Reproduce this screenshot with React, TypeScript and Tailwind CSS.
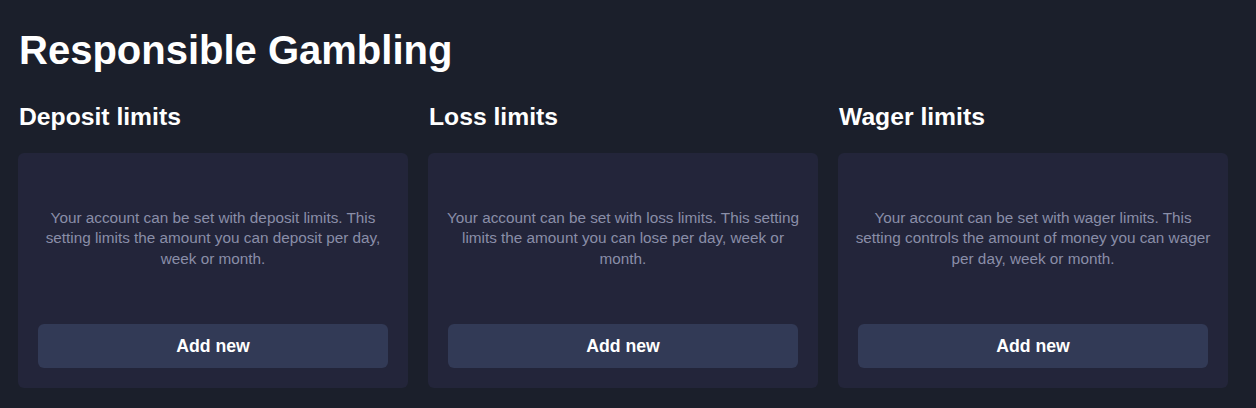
const sections = [
  {
    title: 'Deposit limits',
    text: 'Your account can be set with deposit limits. This setting limits the amount you can deposit per day, week or month.',
  },
  {
    title: 'Loss limits',
    text: 'Your account can be set with loss limits. This setting limits the amount you can lose per day, week or month.',
  },
  {
    title: 'Wager limits',
    text: 'Your account can be set with wager limits. This setting controls the amount of money you can wager per day, week or month.',
  },
]

export default function App() {
  return (
    <div
      className="min-h-[408px] bg-[#1b1f2b] px-[18px] pt-[24px] text-white"
      style={{ fontFamily: '"Liberation Sans", Arial, sans-serif' }}
    >
      <h1 className="pl-px text-[40px] font-bold leading-[52px]">Responsible Gambling</h1>
      <div className="mt-[26px] grid w-[1210px] grid-cols-3 gap-5">
        {sections.map((s) => (
          <div key={s.title} className="flex flex-col">
            <h2 className="pl-px text-[24.7px] font-bold leading-[30px]">{s.title}</h2>
            <div className="mt-[21px] flex h-[235px] flex-col rounded-md bg-[#23253a] p-5">
              <div className="-mx-[5px] flex flex-1 items-center justify-center pb-5">
                <p className="text-center text-[15.3px] leading-[20.5px] text-[#8a8ea8]">{s.text}</p>
              </div>
              <button className="h-[44px] w-full rounded-md bg-[#323a56] text-[17.7px] font-bold text-white">
                Add new
              </button>
            </div>
          </div>
        ))}
      </div>
    </div>
  )
}
